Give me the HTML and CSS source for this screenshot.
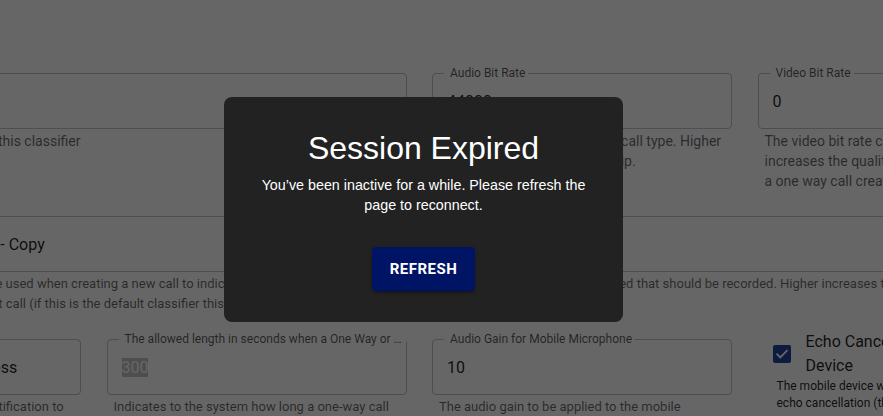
FILE: index.html
```html
<!DOCTYPE html>
<html lang="en">
<head>
<meta charset="utf-8">
<title>Classifier settings</title>
<link rel="stylesheet" href="styles.css">
</head>
<body>
<main class="form">
  <div class="cell span2">
    <div class="field"><span class="label">Classifier Name</span><span class="value"></span></div>
    <p class="helper">The unique name used to identify this classifier</p>
  </div>
  <div class="cell">
    <div class="field"><span class="label">Audio Bit Rate</span><span class="value">44000</span></div>
    <p class="helper">The audio bit rate set for this call type. Higher increases the quality of the clip.</p>
  </div>
  <div class="cell">
    <div class="field"><span class="label">Video Bit Rate</span><span class="value">0</span></div>
    <p class="helper">The video bit rate chosen for this type. Higher increases the quality of the video. Setting 0 on a one way call creates an audio only call.</p>
  </div>

  <div class="cell span4">
    <div class="field"><span class="label">Call Type Name</span><span class="value">Standard Audio Classifier v2 - Copy</span></div>
    <p class="helper small">The name of this call type that will be used when creating a new call to indicate the type of call made, and the bit rates of both audio and video feed that should be recorded. Higher increases the file size. This name is also displayed to the user when using that call (if this is the default classifier this name is used for all calls).</p>
  </div>

  <div class="cell">
    <div class="field"><span class="label">Notification</span><span class="value">Send a Notification on Success</span></div>
    <p class="helper small">Whether or not we send an e-mail notification to the users in the call.</p>
  </div>
  <div class="cell">
    <div class="field"><span class="label">The allowed length in seconds when a One Way or Two Way call is recorded</span><span class="value"><span class="selected">300</span></span></div>
    <p class="helper small">Indicates to the system how long a one-way call can be recorded.</p>
  </div>
  <div class="cell">
    <div class="field"><span class="label">Audio Gain for Mobile Microphone</span><span class="value">10</span></div>
    <p class="helper small">The audio gain to be applied to the mobile microphone.</p>
  </div>
  <div class="cell check-cell">
    <label class="check-row">
      <span class="checkbox"><svg viewBox="0 0 18 18" width="18" height="18"><path d="M4.2 9.3l3.1 3.1 6.5-6.6" fill="none" stroke="#fff" stroke-width="1.9" stroke-linecap="square"/></svg></span>
      <span class="check-label">Echo Cancellation on Mobile Device</span>
    </label>
    <p class="check-helper">The mobile device will use its own built in hardware echo cancellation (the default for most devices).</p>
  </div>
</main>

<div class="overlay">
  <section class="dialog" role="dialog" aria-labelledby="dlg-title">
    <h2 id="dlg-title" class="dialog-title">Session Expired</h2>
    <p class="dialog-text">You’ve been inactive for a while. Please refresh the page to reconnect.</p>
    <button class="btn" type="button">Refresh</button>
  </section>
</div>
</body>
</html>
```

FILE: styles.css
```css
* { box-sizing: border-box; }

html, body {
  margin: 0;
  padding: 0;
  height: 100%;
  overflow: hidden;
  background: #fff;
  font-family: Roboto, "Noto Sans", Arial, sans-serif;
}

.form {
  display: grid;
  grid-template-columns: repeat(4, 300px);
  column-gap: 25.5px;
  row-gap: 25px;
  margin-left: -219px;
  padding-top: 73px;
  width: 1300px;
}

.cell { min-width: 0; }
.span2 { grid-column: span 2; }
.span4 { grid-column: span 4; }

.field {
  position: relative;
  height: 56px;
  border: 1px solid rgba(0, 0, 0, 0.23);
  border-radius: 4px;
  padding: 0 14px;
  display: flex;
  align-items: center;
  font-size: 16px;
  color: rgba(0, 0, 0, 0.87);
}

.label {
  position: absolute;
  top: -9px;
  left: 11px;
  max-width: calc(100% - 11px);
  padding: 0 3px 0 6px;
  background: #fff;
  font-size: 12px;
  line-height: 16px;
  color: rgba(0, 0, 0, 0.66);
  white-space: nowrap;
  overflow: hidden;
  text-overflow: ellipsis;
}

.value { white-space: nowrap; }

.selected {
  background: #c4c4c4;
  color: #fff;
}

.helper {
  margin: 2px 0 0 7px;
  font-size: 14px;
  line-height: 20px;
  color: rgba(0, 0, 0, 0.6);
}

.helper.small { font-size: 13px; }

.check-cell {
  margin-top: -9px;
  padding-left: 15px;
}

.check-row {
  display: flex;
  align-items: center;
  gap: 15px;
}

.checkbox {
  flex: none;
  width: 18px;
  height: 18px;
  border-radius: 2px;
  background: #21449f;
  display: flex;
}

.check-label {
  font-size: 16px;
  line-height: 24px;
  color: rgba(0, 0, 0, 0.87);
  width: 230px;
}

.check-helper {
  margin: 0 0 0 4px;
  font-size: 12px;
  line-height: 17px;
  color: rgba(0, 0, 0, 0.87);
}

.overlay {
  position: fixed;
  inset: 0;
  background: rgba(0, 0, 0, 0.6);
  display: flex;
  align-items: flex-start;
  justify-content: flex-start;
  padding: 97px 0 0 224px;
}

.dialog {
  width: 399px;
  background: #222;
  border-radius: 8px;
  padding: 33px 22px 31px;
  text-align: center;
  color: #fff;
  font-family: "Liberation Sans", Arial, sans-serif;
}

.dialog-title {
  margin: 0;
  font-size: 32px;
  line-height: 37px;
  font-weight: 400;
}

.dialog-text {
  margin: 8px 0 32px;
  font-size: 14.3px;
  line-height: 20px;
}

.btn {
  height: 44px;
  padding: 0 18px;
  border: 0;
  border-radius: 4px;
  background: #001466;
  color: #fff;
  font-family: Roboto, "Noto Sans", sans-serif;
  font-size: 15px;
  font-weight: 700;
  letter-spacing: 0.5px;
  text-transform: uppercase;
  box-shadow: 0 3px 1px -2px rgba(0,0,0,0.2), 0 2px 2px 0 rgba(0,0,0,0.14), 0 1px 5px 0 rgba(0,0,0,0.12);
  cursor: pointer;
}
```
